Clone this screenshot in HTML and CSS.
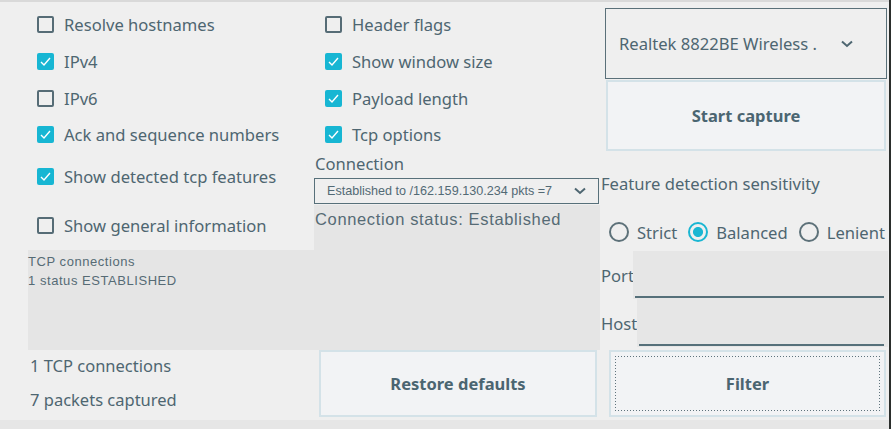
FILE: index.html
```html
<!DOCTYPE html>
<html>
<head>
<meta charset="utf-8">
<link rel="stylesheet" href="styles.css">
</head>
<body>
<div class="page">
  <div class="app">
    <div class="col col1">
      <label class="cb m4"><span class="box"></span>Resolve hostnames</label>
      <label class="cb m1"><span class="box on"><svg viewBox="0 0 17 17"><polyline points="4,9 7,12 13,5"/></svg></span>IPv4</label>
      <label class="cb m1"><span class="box"></span>IPv6</label>
      <label class="cb"><span class="box on"><svg viewBox="0 0 17 17"><polyline points="4,9 7,12 13,5"/></svg></span>Ack and sequence numbers</label>
      <label class="cb m6"><span class="box on"><svg viewBox="0 0 17 17"><polyline points="4,9 7,12 13,5"/></svg></span>Show detected tcp features</label>
      <label class="cb m13"><span class="box"></span>Show general information</label>
      <div class="textarea">TCP connections<br>1 status ESTABLISHED</div>
    </div>
    <div class="col col2">
      <label class="cb m4"><span class="box"></span>Header flags</label>
      <label class="cb m1"><span class="box on"><svg viewBox="0 0 17 17"><polyline points="4,9 7,12 13,5"/></svg></span>Show window size</label>
      <label class="cb m1"><span class="box on"><svg viewBox="0 0 17 17"><polyline points="4,9 7,12 13,5"/></svg></span>Payload length</label>
      <label class="cb"><span class="box on"><svg viewBox="0 0 17 17"><polyline points="4,9 7,12 13,5"/></svg></span>Tcp options</label>
      <div class="conn-label">Connection</div>
      <div class="conn-combo">
        <span>Established to /162.159.130.234 pkts =7</span>
        <svg class="chev" viewBox="0 0 12 8"><polyline points="1,1.5 6,6 11,1.5"/></svg>
      </div>
      <div class="status">Connection status: Established</div>
    </div>
    <div class="col col3">
      <div class="iface">
        <span>Realtek 8822BE Wireless .</span>
        <svg class="chev" viewBox="0 0 12 8"><polyline points="1,1.5 6,6 11,1.5"/></svg>
      </div>
      <button class="btn start">Start capture</button>
      <div class="sens">Feature detection sensitivity</div>
      <div class="radios">
        <label class="radio"><span class="dot"></span>Strict</label>
        <label class="radio"><span class="dot on"></span>Balanced</label>
        <label class="radio"><span class="dot"></span>Lenient</label>
      </div>
      <div class="field port"><span class="flabel">Port</span><span class="input"></span></div>
      <div class="field host"><span class="flabel">Host</span><span class="input"></span></div>
    </div>
    <div class="foot1">
      <div>1 TCP connections</div>
      <div>7 packets captured</div>
    </div>
    <div class="foot2"><button class="btn restore">Restore defaults</button></div>
    <div class="foot3"><button class="btn filter"><span class="focus">Filter</span></button></div>
  </div>
  <div class="bottom"></div>
</div>
</body>
</html>
```

FILE: styles.css
```css
html, body {
  margin: 0;
  padding: 0;
}
body {
  background: #2b2e2c;
  width: 891px;
  height: 429px;
  overflow: hidden;
  font-family: "Noto Sans", "Open Sans", sans-serif;
  color: #4e6671;
}
.page {
  width: 889px;
  height: 429px;
  background: #efefef;
  display: flex;
  flex-direction: column;
}
.app {
  box-sizing: border-box;
  height: 420px;
  border-top: 2px solid #d9d9d9;
  padding-left: 28px;
  display: grid;
  grid-template-columns: 286px 286px 288px;
  grid-template-rows: 348px 70px;
}
.bottom {
  flex: 1;
  background: #e6e6e6;
}
.col {
  display: flex;
  flex-direction: column;
}
.cb {
  height: 36px;
  display: flex;
  align-items: center;
  font-size: 16.6px;
  white-space: nowrap;
}
.col1 .cb { padding-left: 9px; }
.col2 .cb { padding-left: 11px; }
.m1 { margin-top: 1px; }
.m4 { margin-top: 4px; }
.m6 { margin-top: 6px; }
.m13 { margin-top: 13px; }
.box {
  box-sizing: border-box;
  width: 17px;
  height: 17px;
  border: 2px solid #566c76;
  border-radius: 2px;
  margin-right: 10px;
  flex: none;
  display: flex;
}
.box.on {
  border: none;
  background: #17b6d3;
}
.box svg {
  width: 17px;
  height: 17px;
}
.box polyline {
  fill: none;
  stroke: #fff;
  stroke-width: 1.4;
}
.textarea {
  margin-top: 7px;
  height: 100px;
  background: #e5e5e5;
  font-family: "Liberation Sans", Arial, sans-serif;
  font-size: 13px;
  letter-spacing: 0.55px;
  line-height: 19px;
  padding-top: 2px;
  box-sizing: border-box;
  color: #566b75;
}
.conn-label {
  margin-top: 2px;
  padding-left: 1px;
  font-size: 16.6px;
  line-height: 20px;
}
.conn-combo {
  box-sizing: border-box;
  margin-top: 4px;
  width: 285px;
  height: 26px;
  border: 1px solid #57707a;
  display: flex;
  align-items: center;
  justify-content: space-between;
  padding: 0 12px 0 12px;
  font-family: "Liberation Sans", Arial, sans-serif;
  font-size: 12.6px;
  color: #536a75;
}
.chev {
  width: 12px;
  height: 8px;
}
.chev polyline {
  fill: none;
  stroke: #4e6671;
  stroke-width: 2;
}
.status {
  margin-top: 1px;
  flex: 1;
  background: #e5e5e5;
  padding: 4px 0 0 1px;
  font-family: "Liberation Sans", Arial, sans-serif;
  font-size: 16.5px;
  letter-spacing: 0.65px;
  line-height: 20px;
  color: #566b75;
}
.iface {
  box-sizing: border-box;
  margin: 6px 1px 0 5px;
  height: 71px;
  border: 1px solid #5a7079;
  display: flex;
  align-items: center;
  justify-content: space-between;
  padding: 0 33px 0 13px;
  font-size: 16.6px;
}
.btn {
  box-sizing: border-box;
  background: #f2f3f5;
  border: 2px solid #d4e2e8;
  font-family: "Noto Sans", "Open Sans", sans-serif;
  font-weight: bold;
  font-size: 16.5px;
  color: #4b6571;
  padding: 0;
}
.start {
  margin: 1px 2px 0 6px;
  height: 71px;
}
.sens {
  margin-top: 22px;
  padding-left: 1px;
  font-size: 16.6px;
  line-height: 22px;
  white-space: nowrap;
}
.radios {
  margin-top: 22px;
  height: 30px;
  display: flex;
  align-items: center;
  padding-left: 9px;
  font-size: 16.6px;
  white-space: nowrap;
}
.radio {
  display: flex;
  align-items: center;
  margin-right: 11px;
}
.dot {
  box-sizing: border-box;
  width: 20px;
  height: 20px;
  border: 2px solid #5d7179;
  border-radius: 50%;
  margin-right: 8px;
}
.dot.on {
  border-color: #1ab6d2;
  background: radial-gradient(circle, #1ab6d2 0 4.6px, transparent 5.4px);
}
.field {
  display: flex;
  height: 48px;
  font-size: 16.6px;
}
.port { margin-top: 4px; }
.flabel {
  display: flex;
  align-items: center;
  padding-left: 1px;
}
.port .flabel { width: 32px; }
.host .flabel { width: 36px; }
.input {
  flex: 1;
  background-color: #e6e6e6;
  background-image: linear-gradient(#56707a, #56707a);
  background-repeat: no-repeat;
  background-size: calc(100% - 6px) 2px;
  background-position: 2px calc(100% - 1px);
}
.foot1 {
  padding-left: 2px;
  font-size: 16.5px;
  line-height: 34px;
  margin-top: -1px;
}
.foot2 {
  display: flex;
}
.restore {
  margin: 0 0 3px 5px;
  width: 278px;
}
.foot3 {
  display: flex;
}
.filter {
  margin: 0 0 3px 9px;
  width: 277px;
  padding: 4px;
  display: flex;
}
.focus {
  flex: 1;
  display: flex;
  align-items: center;
  justify-content: center;
  background:
    repeating-linear-gradient(90deg, #5f737c 0 1.3px, transparent 1.3px 3px) left top / 100% 1.3px no-repeat,
    repeating-linear-gradient(90deg, #5f737c 0 1.3px, transparent 1.3px 3px) left bottom / 100% 1.3px no-repeat,
    repeating-linear-gradient(180deg, #5f737c 0 1.3px, transparent 1.3px 3px) left top / 1.3px 100% no-repeat,
    repeating-linear-gradient(180deg, #5f737c 0 1.3px, transparent 1.3px 3px) right top / 1.3px 100% no-repeat;
}
```
